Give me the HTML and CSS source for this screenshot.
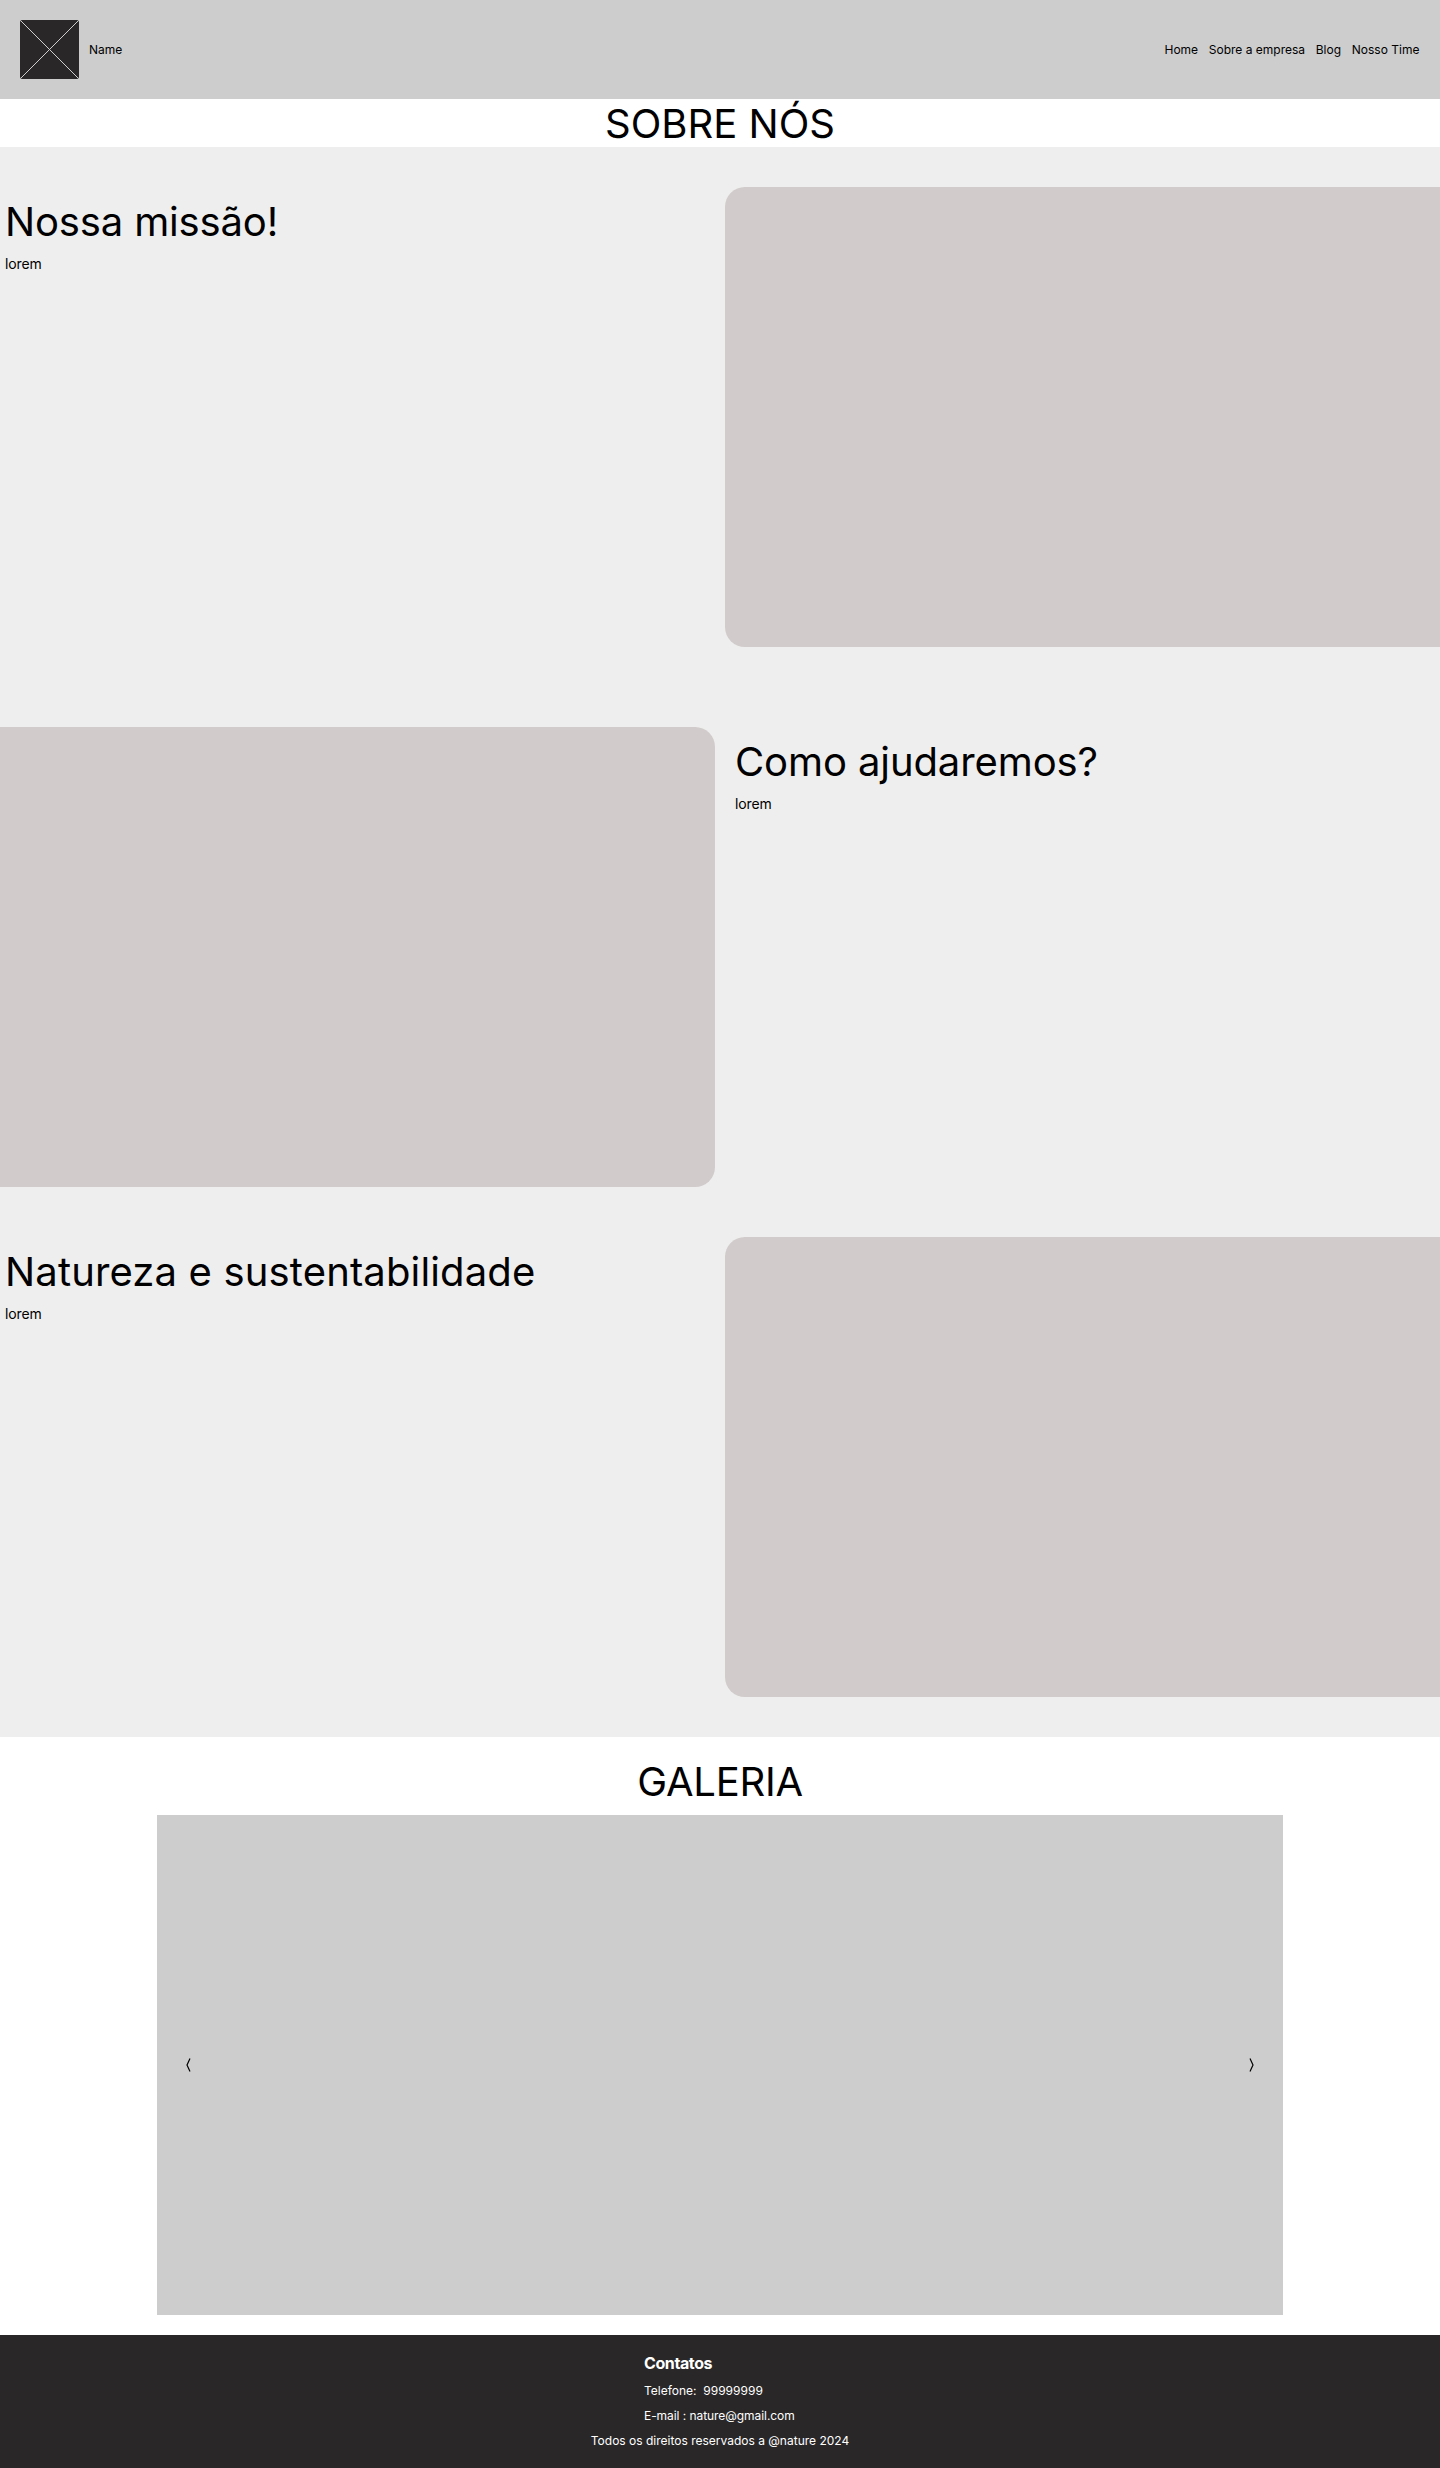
FILE: index.html
```html
<!DOCTYPE html>
<html lang="pt-BR">
<head>
<meta charset="utf-8">
<title>Sobre nós</title>
<link rel="stylesheet" href="styles.css">
</head>
<body>
<header class="header">
  <div class="brand">
    <svg class="logo" width="59" height="59" viewBox="0 0 59 59">
      <rect width="59" height="59" rx="2" fill="#292728"/>
      <path d="M.5 .5 58.5 58.5M58.5 .5 .5 58.5" stroke="#cdcdcd" stroke-width="1"/>
    </svg>
    <span>Name</span>
  </div>
  <nav class="nav">
    <a>Home</a>
    <a>Sobre a empresa</a>
    <a>Blog</a>
    <a>Nosso Time</a>
  </nav>
</header>
<main>
  <h1 class="title">SOBRE NÓS</h1>
  <div class="about">
    <section class="row">
      <div class="copy"><h2 class="title title-mission">Nossa missão!</h2><p>lorem</p></div>
      <div class="picture picture-right"></div>
    </section>
    <section class="row row-middle">
      <div class="picture picture-left"></div>
      <div class="copy copy-right"><h2 class="title title-help">Como ajudaremos?</h2><p>lorem</p></div>
    </section>
    <section class="row">
      <div class="copy"><h2 class="title title-nature">Natureza e sustentabilidade</h2><p>lorem</p></div>
      <div class="picture picture-right"></div>
    </section>
  </div>
  <section class="gallery">
    <h2 class="title title-gallery">GALERIA</h2>
    <div class="carousel">
      <svg width="5" height="14" viewBox="0 0 5 14"><path d="M4 .5 1 7 4 13.5" fill="none" stroke="#000" stroke-width="1.2"/></svg>
      <svg width="5" height="14" viewBox="0 0 5 14"><path d="M1 .5 4 7 1 13.5" fill="none" stroke="#000" stroke-width="1.2"/></svg>
    </div>
  </section>
</main>
<footer class="footer">
  <div class="contacts">
    <h3>Contatos</h3>
    <p class="phone">Telefone:  99999999</p>
    <p class="email">E-mail : nature@gmail.com</p>
  </div>
  <p>Todos os direitos reservados a @nature 2024</p>
</footer>
</body>
</html>
```
FILE: styles.css
```css
* { box-sizing: border-box; }
body {
  margin: 0;
  background: #fff;
  color: #000;
  font: 12px/15px Inter, sans-serif;
}
h1, h2, h3, p { margin: 0; }
.header {
  display: flex;
  align-items: center;
  justify-content: space-between;
  height: 99px;
  padding: 20px;
  background: #cdcdcd;
}
.brand { display: flex; align-items: center; gap: 10px; }
.nav { display: flex; gap: 10.7px; padding-right: 0.6px; }
.title {
  height: 48px;
  font-size: 40px;
  line-height: 50px;
  font-weight: 400;
}
.title-mission { letter-spacing: -0.15px; }
.title-help { letter-spacing: -0.1px; }
.title-nature { letter-spacing: 0.15px; }
.title-gallery { letter-spacing: -0.25px; }
h1.title, .gallery .title { text-align: center; }
.about { padding: 40px 0; background: #eee; }
.row {
  display: grid;
  grid-template-columns: 1fr 1fr;
  gap: 10px;
  height: 460px;
}
.row-middle { margin: 80px 0 50px; }
.copy {
  display: flex;
  flex-direction: column;
  gap: 10px;
  padding: 10px 5px;
  font-size: 14px;
  line-height: 17px;
}
.copy p { letter-spacing: -0.1px; }
.copy-right { padding: 10px; }
.picture { background: #d1cbcb; }
.picture-right { border-radius: 20px 0 0 20px; }
.picture-left { border-radius: 0 20px 20px 0; }
.gallery {
  display: flex;
  flex-direction: column;
  align-items: center;
  gap: 10px;
  padding: 20px 0;
}
.carousel {
  display: flex;
  align-items: center;
  justify-content: space-between;
  width: 1126px;
  height: 500px;
  padding: 0 29px;
  background: #cdcdcd;
}
.footer {
  display: flex;
  flex-direction: column;
  align-items: center;
  gap: 10px;
  height: 133px;
  padding-top: 19px;
  background: #292728;
  color: #fff;
}
.contacts { display: flex; flex-direction: column; gap: 10px; width: 152px; }
.contacts h3 { font-size: 16px; line-height: 19px; font-weight: 700; letter-spacing: -0.4px; }
.phone { white-space: pre; }
.email { letter-spacing: -0.06px; white-space: nowrap; }
```
